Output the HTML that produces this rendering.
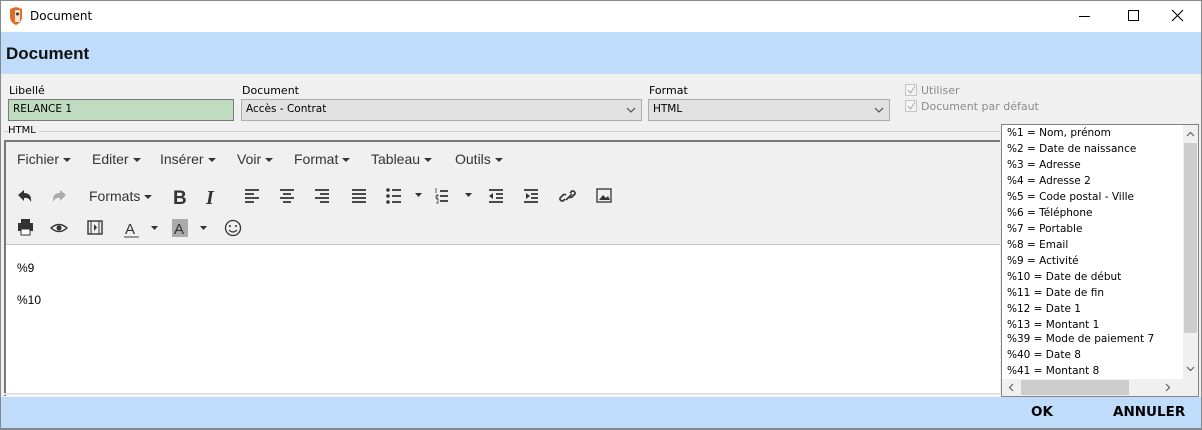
<!DOCTYPE html><html><head><meta charset="utf-8"><style>
*{margin:0;padding:0;box-sizing:border-box}
body{width:1202px;height:430px;position:relative;background:#f0f0f0;font-family:"DejaVu Sans","Liberation Sans",sans-serif;font-size:11px;color:#000;overflow:hidden}
.a{position:absolute}
.lab{font-size:11px;color:#000}
.inp{position:absolute;height:22px;border:1px solid #adadad;background:#e1e1e1;padding:3px 4px;font-size:10.5px}
.m{position:absolute;top:151px;font-family:"Liberation Sans",Arial,sans-serif;font-size:14px;color:#333}
.car{display:inline-block;width:0;height:0;border-left:4px solid transparent;border-right:4px solid transparent;border-top:4px solid #333;vertical-align:middle;margin-left:4px}
.li{position:absolute;left:1007px;font-size:10.5px;white-space:nowrap}
svg{position:absolute;overflow:visible}
</style></head><body>
<div class="a" style="left:0;top:0;width:1202px;height:32px;background:#fff;border:1px solid #888;border-bottom:none"></div>
<svg style="left:9px;top:7px" width="14" height="18"><path d="M1 2 L7 0 L13 2 L13 11 Q12 16 7 18 Q2 16 1 11Z" fill="#e06a2a"/><path d="M6 3h5v12h-5z" fill="#f4e3d0"/><circle cx="8.5" cy="7" r="1.5" fill="#333"/></svg>
<div class="a" style="left:30px;top:9px;font-size:12px">Document</div>
<div class="a" style="left:1079px;top:16px;width:11px;height:1px;background:#000"></div>
<div class="a" style="left:1128px;top:10px;width:11px;height:11px;border:1px solid #000"></div>
<svg style="left:1172px;top:10px" width="12" height="12"><path d="M0 0L11 11M11 0L0 11" stroke="#000" stroke-width="1.1"/></svg>
<div class="a" style="left:1px;top:32px;width:1200px;height:42px;background:#c0dcfb"></div>
<div class="a" style="left:6px;top:44px;font-size:17px;font-weight:bold;font-family:'Liberation Sans',Arial,sans-serif;color:#111">Document</div>
<div class="a lab" style="left:9px;top:84px">Libellé</div>
<div class="inp" style="left:8px;top:99px;width:226px;background:#c0dcc0;border-color:#7a7a7a">RELANCE 1</div>
<div class="a lab" style="left:242px;top:84px">Document</div>
<div class="inp" style="left:241px;top:99px;width:401px">Accès - Contrat</div>
<svg style="left:626px;top:107px" width="10" height="6"><path d="M1 1L5 5L9 1" stroke="#444" fill="none"/></svg>
<div class="a lab" style="left:649px;top:84px">Format</div>
<div class="inp" style="left:648px;top:99px;width:242px">HTML</div>
<svg style="left:874px;top:107px" width="10" height="6"><path d="M1 1L5 5L9 1" stroke="#444" fill="none"/></svg>
<div class="a" style="left:905px;top:84px;width:12px;height:12px;border:1px solid #c5c5c5;background:#f4f4f4"></div>
<svg style="left:907px;top:86px" width="9" height="8"><path d="M1 4L3.5 7L8 0" stroke="#aaa" fill="none"/></svg>
<div class="a" style="left:921px;top:84px;color:#8a8a8a">Utiliser</div>
<div class="a" style="left:905px;top:100px;width:12px;height:12px;border:1px solid #c5c5c5;background:#f4f4f4"></div>
<svg style="left:907px;top:102px" width="9" height="8"><path d="M1 4L3.5 7L8 0" stroke="#aaa" fill="none"/></svg>
<div class="a" style="left:921px;top:100px;color:#8a8a8a">Document par défaut</div>
<div class="a" style="left:4px;top:131px;width:996px;height:1px;background:#d0d0d0"></div>
<div class="a" style="left:8px;top:125px;background:#f0f0f0;padding-right:3px;font-size:10px">HTML</div>
<div class="a" style="left:4px;top:140px;width:996px;height:256px;border-left:2px solid #777;border-top:2px solid #777;background:#fff"></div>
<div class="a" style="left:6px;top:142px;width:994px;height:103px;background:#f0f0f0;border-bottom:1px solid #c5c5c5"></div>
<div class="m" style="left:17px">Fichier<span class="car"></span></div>
<div class="m" style="left:92px">Editer<span class="car"></span></div>
<div class="m" style="left:160px">Insérer<span class="car"></span></div>
<div class="m" style="left:237px">Voir<span class="car"></span></div>
<div class="m" style="left:294px">Format<span class="car"></span></div>
<div class="m" style="left:371px">Tableau<span class="car"></span></div>
<div class="m" style="left:455px">Outils<span class="car"></span></div>
<div class="m" style="left:89px;top:188px">Formats<span class="car"></span></div>
<svg style="left:0;top:0" width="700" height="245">
<g fill="#333" stroke="#333">
<path d="M18 195L24 190V193Q32 193 31 202Q29 197 24 198V201Z" stroke="none"/>
<path d="M66 195L60 190V193Q52 193 53 202Q55 197 60 198V201Z" stroke="none" fill="#aaa"/>
<text x="173" y="204" font-family="Liberation Sans" font-weight="bold" font-size="19" stroke="none">B</text>
<text x="206" y="204" font-family="Liberation Serif" font-style="italic" font-weight="bold" font-size="20" stroke="none">I</text>
<g stroke-width="1.8">
<path d="M245 190h14M245 194h9M245 198h14M245 202h9"/>
<path d="M280 190h14M283 194h8M280 198h14M283 202h8"/>
<path d="M315 190h14M320 194h9M315 198h14M320 202h9"/>
<path d="M352 190h14M352 194h14M352 198h14M352 202h14"/>
<path d="M392 190h9M392 196h9M392 202h9"/>
<path d="M440 191h8M440 196h8M440 201h8"/>
<path d="M489 190h14M496 194h7M496 198h7M489 202h14"/>
<path d="M524 190h14M531 194h7M531 198h7M524 202h14"/>
</g>
<circle cx="388" cy="190" r="1.8" stroke="none"/><circle cx="388" cy="196" r="1.8" stroke="none"/><circle cx="388" cy="202" r="1.8" stroke="none"/>
<path d="M436 188v5M436 195h2v1h-2v2h2M436 199h2v4h-2" fill="none" stroke-width="0.8"/>
<path d="M489 196l4-3v6z M530 196l-4-3v6z" stroke="none"/>
<path d="M415 193h7l-3.5 4z M465 193h7l-3.5 4z M151 226h7l-3.5 4z M200 226h7l-3.5 4z" stroke="none"/>
<g fill="none" stroke-width="1.6"><path d="M565 199l-2 2a2.5 2.5 0 0 1-3-3l3-3a2.5 2.5 0 0 1 3 0"/><path d="M570 193l2-2a2.5 2.5 0 0 1 3 3l-3 3a2.5 2.5 0 0 1-3 0"/><path d="M566 200l6-6"/></g>
<rect x="597" y="189" width="14" height="13" fill="none" stroke-width="1.3"/><path d="M599 200l4-5 3 3 2-2 2 4z" stroke="none"/>
<rect x="18" y="223" width="15" height="8" stroke="none"/><rect x="21" y="219" width="9" height="4" stroke="none"/><rect x="21" y="229" width="9" height="6" fill="#fff" stroke="#333"/>
<path d="M51 228q8-7 16 0q-8 7-16 0z" fill="none" stroke-width="1.4"/><circle cx="59" cy="228" r="2.5" stroke="none"/>
<rect x="88" y="221" width="14" height="13" fill="none" stroke-width="1.4"/><path d="M91 221v13M99 221v13" stroke-width="1"/><path d="M94 224l3 3.5-3 3.5z" stroke="none"/>
<text x="125" y="234" font-family="Liberation Sans" font-size="15" stroke="none">A</text><rect x="124" y="236" width="15" height="2" fill="#999" stroke="none"/>
<rect x="172" y="219" width="16" height="18" fill="#aaa" stroke="none"/><text x="174" y="234" font-family="Liberation Sans" font-size="15" stroke="none">A</text>
<circle cx="233" cy="228" r="7.5" fill="none" stroke-width="1.3"/><circle cx="230" cy="226" r="1" stroke="none"/><circle cx="236" cy="226" r="1" stroke="none"/><path d="M229 230q4 4 8 0" fill="none" stroke-width="1.2"/>
</g></svg>
<div class="a" style="left:17px;top:261px;font-family:'Liberation Sans',Arial,sans-serif;font-size:12px">%9</div>
<div class="a" style="left:17px;top:293px;font-family:'Liberation Sans',Arial,sans-serif;font-size:12px">%10</div>
<div class="a" style="left:4px;top:393px;width:996px;height:2px;background:#e0e0e0"></div>
<div class="a" style="left:1001px;top:124px;width:198px;height:273px;border:1px solid #828282;background:#fff"></div>
<div class="a" style="left:1183px;top:125px;width:15px;height:254px;background:#f0f0f0"></div>
<div class="a" style="left:1184px;top:143px;width:13px;height:190px;background:#cdcdcd"></div>
<svg style="left:1186px;top:131px" width="9" height="6"><path d="M1 5L4.5 1.5L8 5" stroke="#606060" fill="none" stroke-width="1.2"/></svg>
<svg style="left:1186px;top:366px" width="9" height="6"><path d="M1 1L4.5 4.5L8 1" stroke="#606060" fill="none" stroke-width="1.2"/></svg>
<div class="a" style="left:1002px;top:379px;width:196px;height:17px;background:#f0f0f0"></div>
<div class="a" style="left:1021px;top:380px;width:108px;height:15px;background:#cdcdcd"></div>
<svg style="left:1008px;top:383px" width="6" height="9"><path d="M5 1L1.5 4.5L5 8" stroke="#606060" fill="none" stroke-width="1.2"/></svg>
<svg style="left:1165px;top:383px" width="6" height="9"><path d="M1 1L4.5 4.5L1 8" stroke="#606060" fill="none" stroke-width="1.2"/></svg>
<div class="li" style="top:127px">%1 = Nom, prénom</div>
<div class="li" style="top:143px">%2 = Date de naissance</div>
<div class="li" style="top:159px">%3 = Adresse</div>
<div class="li" style="top:175px">%4 = Adresse 2</div>
<div class="li" style="top:191px">%5 = Code postal - Ville</div>
<div class="li" style="top:207px">%6 = Téléphone</div>
<div class="li" style="top:223px">%7 = Portable</div>
<div class="li" style="top:239px">%8 = Email</div>
<div class="li" style="top:255px">%9 = Activité</div>
<div class="li" style="top:271px">%10 = Date de début</div>
<div class="li" style="top:287px">%11 = Date de fin</div>
<div class="li" style="top:303px">%12 = Date 1</div>
<div class="li" style="top:319px">%13 = Montant 1</div>
<div class="li" style="top:333px">%39 = Mode de paiement 7</div>
<div class="li" style="top:349px">%40 = Date 8</div>
<div class="li" style="top:365px">%41 = Montant 8</div>
<div class="a" style="left:1px;top:397px;width:1200px;height:31px;background:#c0dcfb"></div>
<div class="a" style="left:1031px;top:404px;font-weight:bold;font-size:13.5px">OK</div>
<div class="a" style="left:1113px;top:404px;font-weight:bold;font-size:13.5px">ANNULER</div>
<div class="a" style="left:0;top:428px;width:1202px;height:2px;background:#888"></div>
<div class="a" style="left:0;top:0;width:1px;height:430px;background:#888"></div>
<div class="a" style="left:1201px;top:0;width:1px;height:430px;background:#888"></div>
</body></html>
